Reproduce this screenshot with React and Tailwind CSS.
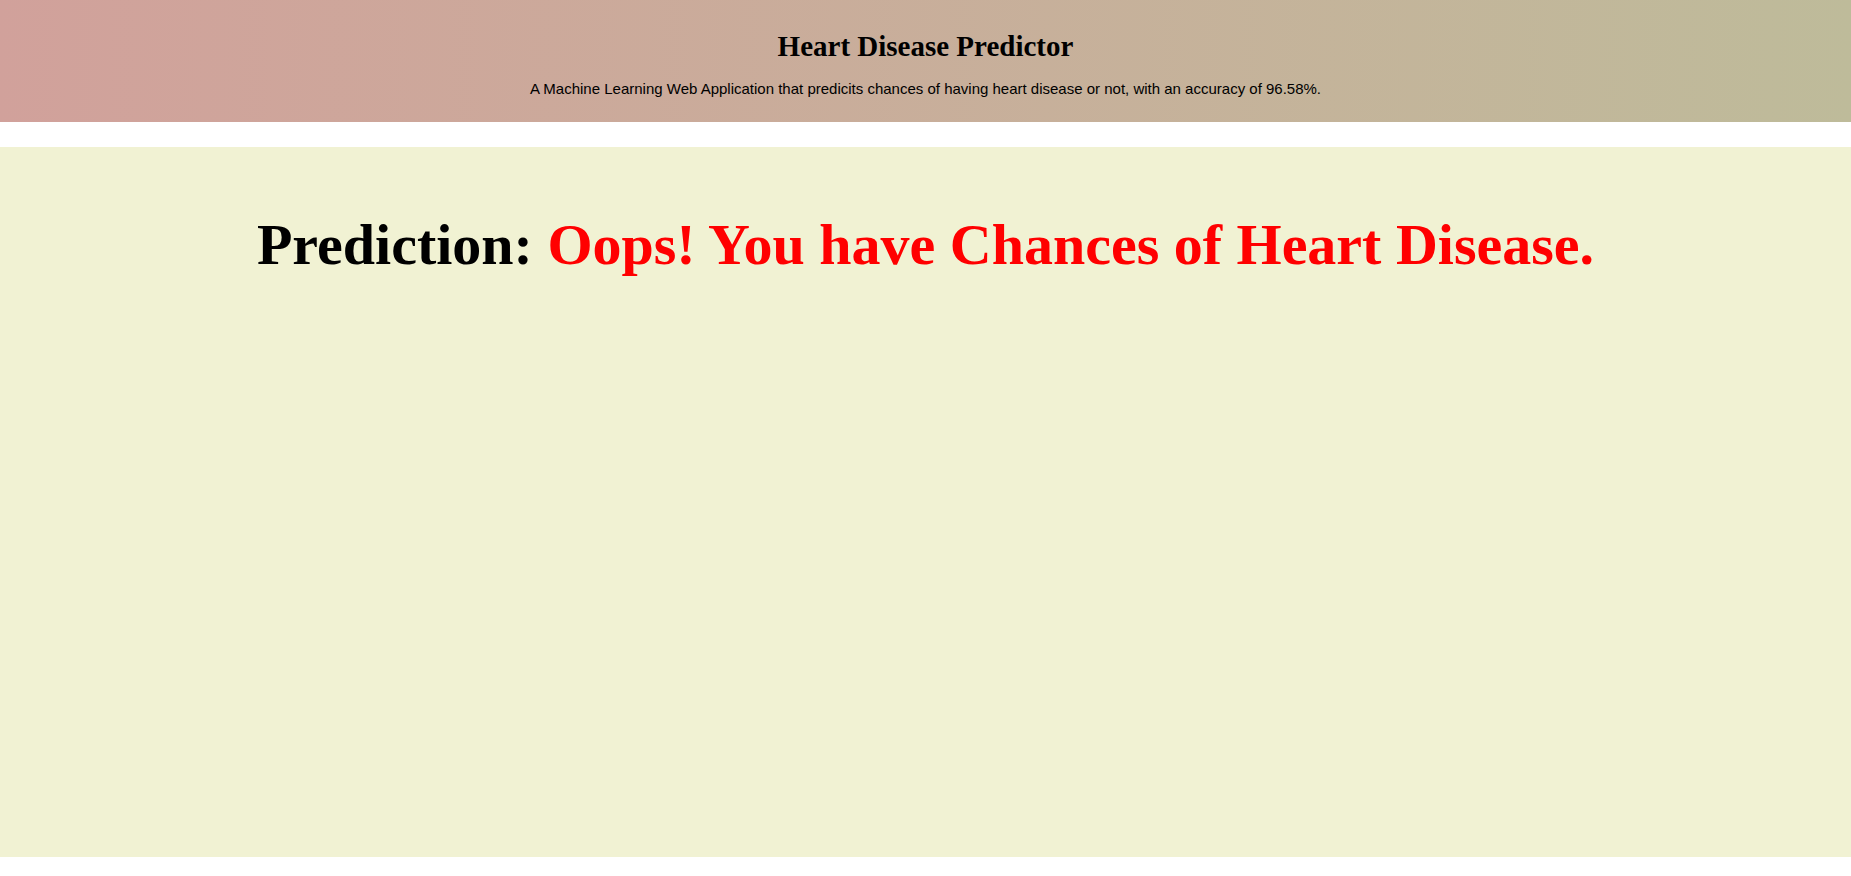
import React from 'react';

const App = () => {
  return (
    <div className="min-h-screen bg-white">
      <header className="h-[122px] bg-linear-to-r from-[#d1a19b] to-[#bebb9a] flex flex-col items-center text-black">
        <h2 className="mt-[28px] text-[29px] leading-[36px] font-bold font-['Liberation_Serif',serif]">
          Heart Disease Predictor
        </h2>
        <p className="mt-[16px] text-[15px] leading-[18px] font-['Liberation_Sans',Arial,sans-serif]">
          A Machine Learning Web Application that predicits chances of having heart disease or not, with an accuracy of 96.58%.
        </p>
      </header>

      <div className="h-[25px]" />

      <main className="h-[710px] bg-[#f1f2d3] flex justify-center">
        <h1 className="mt-[62px] text-[58px] leading-[72px] font-bold font-['Liberation_Serif',serif] text-black">
          Prediction: <span className="text-[#ff0000]">Oops! You have Chances of Heart Disease.</span>
        </h1>
      </main>
    </div>
  );
};

export default App;
